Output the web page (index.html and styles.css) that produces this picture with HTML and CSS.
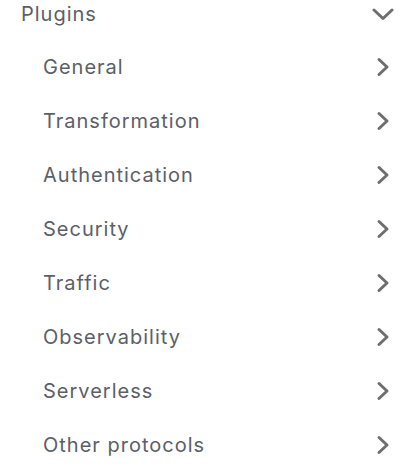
FILE: index.html
```html
<!DOCTYPE html>
<html>
<head>
<meta charset="utf-8">
<link rel="stylesheet" href="styles.css">
</head>
<body>
<nav class="menu">
  <div class="group-head">
    <span class="label">Plugins</span>
    <svg class="chev-down" width="22" height="14" viewBox="0 0 22 14"><polyline points="2,3 11,11.5 20,3" fill="none" stroke="currentColor" stroke-width="3" stroke-linecap="round" stroke-linejoin="round"/></svg>
  </div>
  <ul class="items">
    <li class="item"><span class="label">General</span><svg class="chev-right" width="14" height="20" viewBox="0 0 14 20"><polyline points="3,2.5 11,10 3,17.5" fill="none" stroke="currentColor" stroke-width="3" stroke-linecap="round" stroke-linejoin="round"/></svg></li>
    <li class="item"><span class="label">Transformation</span><svg class="chev-right" width="14" height="20" viewBox="0 0 14 20"><polyline points="3,2.5 11,10 3,17.5" fill="none" stroke="currentColor" stroke-width="3" stroke-linecap="round" stroke-linejoin="round"/></svg></li>
    <li class="item"><span class="label">Authentication</span><svg class="chev-right" width="14" height="20" viewBox="0 0 14 20"><polyline points="3,2.5 11,10 3,17.5" fill="none" stroke="currentColor" stroke-width="3" stroke-linecap="round" stroke-linejoin="round"/></svg></li>
    <li class="item"><span class="label">Security</span><svg class="chev-right" width="14" height="20" viewBox="0 0 14 20"><polyline points="3,2.5 11,10 3,17.5" fill="none" stroke="currentColor" stroke-width="3" stroke-linecap="round" stroke-linejoin="round"/></svg></li>
    <li class="item"><span class="label">Traffic</span><svg class="chev-right" width="14" height="20" viewBox="0 0 14 20"><polyline points="3,2.5 11,10 3,17.5" fill="none" stroke="currentColor" stroke-width="3" stroke-linecap="round" stroke-linejoin="round"/></svg></li>
    <li class="item"><span class="label">Observability</span><svg class="chev-right" width="14" height="20" viewBox="0 0 14 20"><polyline points="3,2.5 11,10 3,17.5" fill="none" stroke="currentColor" stroke-width="3" stroke-linecap="round" stroke-linejoin="round"/></svg></li>
    <li class="item"><span class="label">Serverless</span><svg class="chev-right" width="14" height="20" viewBox="0 0 14 20"><polyline points="3,2.5 11,10 3,17.5" fill="none" stroke="currentColor" stroke-width="3" stroke-linecap="round" stroke-linejoin="round"/></svg></li>
    <li class="item"><span class="label">Other protocols</span><svg class="chev-right" width="14" height="20" viewBox="0 0 14 20"><polyline points="3,2.5 11,10 3,17.5" fill="none" stroke="currentColor" stroke-width="3" stroke-linecap="round" stroke-linejoin="round"/></svg></li>
  </ul>
</nav>
</body>
</html>
```
FILE: styles.css
```css
html, body {
  margin: 0;
  padding: 0;
  background: #ffffff;
}
.menu {
  font-family: Inter, "Noto Sans", sans-serif;
  font-size: 20px;
  font-weight: 400;
  letter-spacing: 1px;
  color: #5b6067;
  padding: 0 8px 0 21px;
}
.group-head {
  display: flex;
  align-items: center;
  justify-content: space-between;
  height: 28px;
  margin-bottom: 12px;
}
.chev-down {
  color: #6e6e6e;
  display: block;
  margin-right: -1px;
}
.items {
  list-style: none;
  margin: 0;
  padding: 0 3px 0 22px;
}
.item {
  display: flex;
  align-items: center;
  justify-content: space-between;
  height: 54px;
}
.chev-right {
  color: #6e6e6e;
  display: block;
}
.label {
  line-height: 1.2;
}
```
